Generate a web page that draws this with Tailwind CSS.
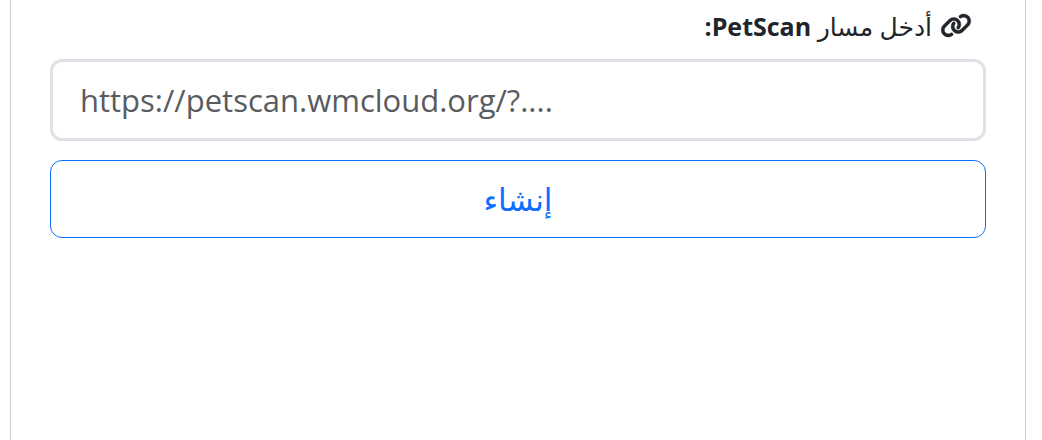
<!DOCTYPE html>
<html lang="ar" dir="rtl">
<head>
<meta charset="utf-8">
<meta name="viewport" content="width=device-width, initial-scale=1">
<title>PetScan</title>
<script src="https://cdn.jsdelivr.net/npm/@tailwindcss/browser@4"></script>
</head>
<body class="bg-white text-[#212529] font-['Open_Sans','DejaVu_Sans',sans-serif]">
<main class="flex min-h-screen flex-col border-x border-[#cccccc] bg-white mr-4 ml-[10px] px-[39px]">
  <form class="flex flex-col">
    <label for="url" class="flex h-[59px] items-center gap-2 pr-[14px] pb-2 text-[25px] leading-8">
      <svg class="h-[25px] w-8 shrink-0" viewBox="0 0 640 512" fill="currentColor" stroke="currentColor" stroke-width="8" aria-hidden="true"><path d="M579.8 267.7c56.5-56.5 56.5-148 0-204.5c-50-50-128.8-56.5-186.3-15.4l-1.6 1.1c-14.4 10.3-17.7 30.3-7.4 44.6s30.3 17.7 44.6 7.4l1.6-1.1c32.1-22.9 76-19.3 103.8 8.6c31.5 31.5 31.5 82.5 0 114L422.3 334.8c-31.5 31.5-82.5 31.5-114 0c-27.9-27.9-31.5-71.8-8.6-103.8l1.1-1.6c10.3-14.4 6.9-34.4-7.4-44.6s-34.4-6.9-44.6 7.4l-1.1 1.6C206.5 251.2 213 330 263 380c56.5 56.5 148 56.5 204.5 0L579.8 267.7zM60.2 244.3c-56.5 56.5-56.5 148 0 204.5c50 50 128.8 56.5 186.3 15.4l1.6-1.1c14.4-10.3 17.7-30.3 7.4-44.6s-30.3-17.7-44.6-7.4l-1.6 1.1c-32.1 22.9-76 19.3-103.8-8.6C74 372 74 321 105.5 289.5L217.7 177.2c31.5-31.5 82.5-31.5 114 0c27.9 27.9 31.5 71.8 8.6 103.9l-1.1 1.6c-10.3 14.4-6.9 34.4 7.4 44.6s34.4 6.9 44.6-7.4l1.1-1.6C433.5 260.8 427 182 377 132c-56.5-56.5-148-56.5-204.5 0L60.2 244.3z"/></svg>
      <span>أدخل مسار <b class="font-bold">PetScan:</b></span>
    </label>
    <input id="url" type="url" dir="ltr" placeholder="https://petscan.wmcloud.org/?...." class="h-[82px] w-full rounded-xl border-3 border-[#dee2e6] bg-white px-[27px] text-[31px] placeholder:text-[#595c5f]">
    <button type="submit" class="mt-[19px] h-[78px] w-full rounded-xl border border-[#0d6efd] text-[31px] text-[#0d6efd]">إنشاء</button>
  </form>
</main>
</body>
</html>
